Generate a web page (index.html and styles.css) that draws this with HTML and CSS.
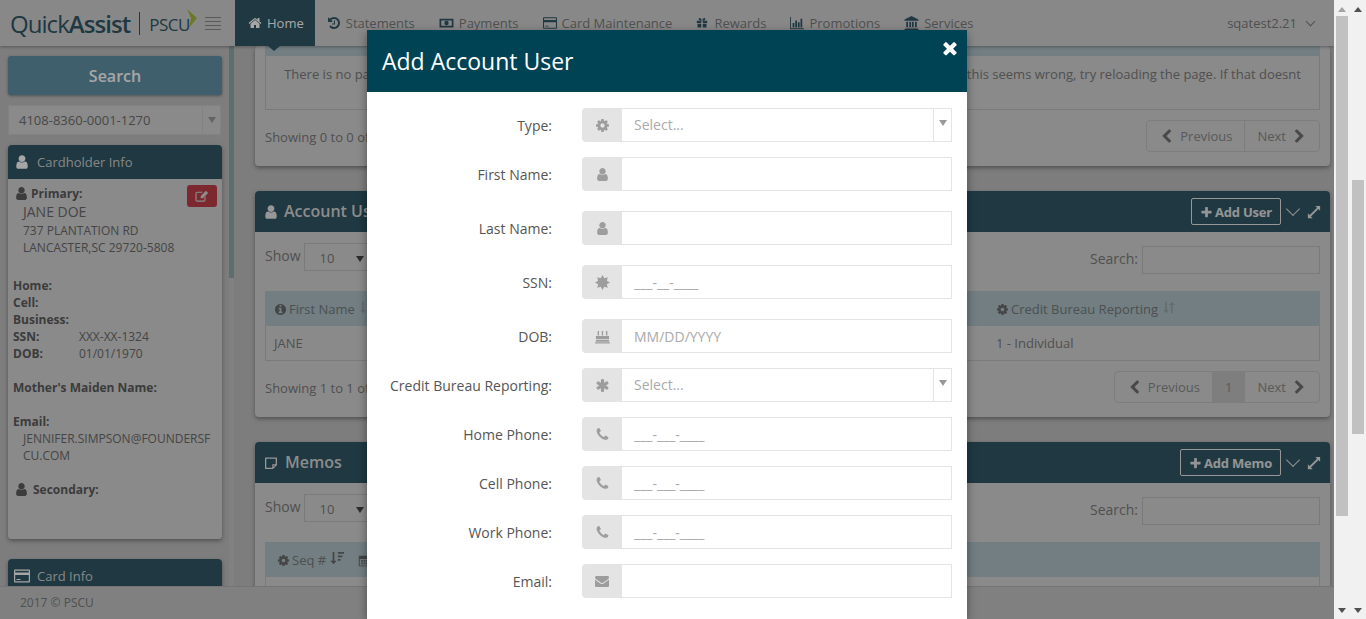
FILE: index.html

```html
<!DOCTYPE html>
<html lang="en">
<head>
  <meta charset="UTF-8">
  <title>QuickAssist - Add Account User</title>
  <link rel="stylesheet" href="styles.css">
</head>
<body>
  <svg class="defs" xmlns="http://www.w3.org/2000/svg">
    <symbol id="i-user" viewBox="0 0 1792 1792"><path d="M1536 1399q0 109-62.5 187t-150.5 78h-854q-88 0-150.5-78t-62.5-187q0-85 8.5-160.5t31.5-152 58.5-131 94-89 134.5-34.5q131 128 313 128t313-128q76 0 134.5 34.5t94 89 58.5 131 31.5 152 8.5 160.5zm-256-887q0 159-112.5 271.5t-271.5 112.5-271.5-112.5-112.5-271.5 112.5-271.5 271.5-112.5 271.5 112.5 112.5 271.5z"/></symbol>
    <symbol id="i-home" viewBox="0 0 1792 1792"><path d="M1472 992v480q0 26-19 45t-45 19h-384v-384h-256v384h-384q-26 0-45-19t-19-45v-480q0-1 .5-3t.5-3l575-474 575 474q1 2 1 6zm223-69l-62 74q-8 9-21 11h-3q-13 0-21-7l-692-577-692 577q-12 8-24 7-13-2-21-11l-62-74q-8-10-7-23.5t11-21.5l719-599q32-26 76-26t76 26l244 204v-195q0-14 9-23t23-9h192q14 0 23 9t9 23v408l219 182q10 8 11 21.5t-7 23.5z"/></symbol>
    <symbol id="i-cog" viewBox="0 0 1792 1792"><path d="M1152 896q0-106-75-181t-181-75-181 75-75 181 75 181 181 75 181-75 75-181zm512-109v222q0 12-8 23t-20 13l-185 28q-19 54-39 91 35 50 107 138 10 12 10 25t-9 23q-27 37-99 108t-94 71q-12 0-26-9l-138-108q-44 23-91 38-16 136-29 186-7 28-36 28h-222q-14 0-24.5-8.5t-11.5-21.5l-28-184q-49-16-90-37l-141 107q-10 9-25 9-14 0-25-11-126-114-165-168-7-10-7-23 0-12 8-23 15-21 51-66.5t54-70.5q-27-50-41-99l-183-27q-13-2-21-12.5t-8-23.5v-222q0-12 8-23t19-13l186-28q14-46 39-92-40-57-107-138-10-12-10-24 0-10 9-23 26-36 98.5-107.5t94.5-71.5q13 0 26 10l138 107q44-23 91-38 16-136 29-186 7-28 36-28h222q14 0 24.5 8.5t11.5 21.5l28 184q49 16 90 37l142-107q9-9 24-9 13 0 25 10 129 119 165 170 7 8 7 22 0 12-8 23-15 21-51 66.5t-54 70.5q26 50 41 98l183 28q13 2 21 12.5t8 23.5z"/></symbol>
    <symbol id="i-phone" viewBox="0 0 1792 1792"><path d="M1600 1240q0 27-10 70.5t-21 68.5q-21 50-122 106-94 51-186 51-27 0-53-3.5t-57.5-12.5-47-14.5-55.5-20.5-49-18q-98-35-175-83-127-79-264-216t-216-264q-48-77-83-175-3-9-18-49t-20.5-55.5-14.5-47-12.5-57.5-3.5-53q0-92 51-186 56-101 106-122 25-11 68.5-21t70.5-10q14 0 21 3 18 6 53 76 11 19 30 54t35 63.5 31 53.5q3 4 17.5 25t21.5 35.5 7 28.5q0 20-28.5 50t-62 55-62 53-28.5 46q0 9 5 22.5t8.5 20.5 14 24 11.5 19q76 137 174 235t235 174q2 1 19 11.5t24 14 20.5 8.5 22.5 5q18 0 46-28.5t53-62 55-62 50-28.5q14 0 28.5 7t35.5 21.5 25 17.5q25 15 53.5 31t63.5 35 54 30q70 35 76 53 3 7 3 21z"/></symbol>
    <symbol id="i-mail" viewBox="0 0 1792 1792"><path d="M1792 710v794q0 66-47 113t-113 47h-1472q-66 0-113-47t-47-113v-794q44 49 101 87 362 246 497 345 57 42 92.5 65.5t94.5 48 110 24.5h2q51 0 110-24.5t94.5-48 92.5-65.5q170-123 498-345 57-39 100-87zm0-294q0 79-49 151t-122 123q-376 261-468 325-10 7-42.5 30.5t-54 38-52 32.5-57.5 27-50 9h-2q-23 0-50-9t-57.5-27-52-32.5-54-38-42.5-30.5q-91-64-262-182.5t-205-142.5q-62-42-117-115.5t-55-136.5q0-78 41.5-130t118.5-52h1472q65 0 112.5 47t47.5 113z"/></symbol>
    <symbol id="i-times" viewBox="0 0 1792 1792"><path d="M1490 1322q0 40-28 68l-136 136q-28 28-68 28t-68-28l-294-294-294 294q-28 28-68 28t-68-28l-136-136q-28-28-28-68t28-68l294-294-294-294q-28-28-28-68t28-68l136-136q28-28 68-28t68 28l294 294 294-294q28-28 68-28t68 28l136 136q28 28 28 68t-28 68l-294 294 294 294q28 28 28 68z"/></symbol>
    <symbol id="i-asterisk" viewBox="0 0 1792 1792"><path d="M1546 1050q46 26 59.5 77.5t-12.5 97.5l-64 110q-26 46-77.5 59.5t-97.5-12.5l-266-153v307q0 52-38 90t-90 38h-128q-52 0-90-38t-38-90v-307l-266 153q-46 26-97.5 12.5t-77.5-59.5l-64-110q-26-46-12.5-97.5t59.5-77.5l266-154-266-154q-46-26-59.5-77.5t12.5-97.5l64-110q26-46 77.5-59.5t97.5 12.5l266 153v-307q0-52 38-90t90-38h128q52 0 90 38t38 90v307l266-153q46-26 97.5-12.5t77.5 59.5l64 110q26 46 12.5 97.5t-59.5 77.5l-266 154z"/></symbol>
    <symbol id="i-left" viewBox="0 0 1792 1792"><path d="M1427 301l-531 531 531 531q19 19 19 45t-19 45l-166 166q-19 19-45 19t-45-19l-742-742q-19-19-19-45t19-45l742-742q19-19 45-19t45 19l166 166q19 19 19 45t-19 45z"/></symbol>
    <symbol id="i-right" viewBox="0 0 1792 1792"><path d="M1363 877l-742 742q-19 19-45 19t-45-19l-166-166q-19-19-19-45t19-45l531-531-531-531q-19-19-19-45t19-45l166-166q19-19 45-19t45 19l742 742q19 19 19 45t-19 45z"/></symbol>
    <symbol id="i-plus" viewBox="0 0 1792 1792"><path d="M1600 736v192q0 40-28 68t-68 28h-416v416q0 40-28 68t-68 28h-192q-40 0-68-28t-28-68v-416h-416q-40 0-68-28t-28-68v-192q0-40 28-68t68-28h416v-416q0-40 28-68t68-28h192q40 0 68 28t28 68v416h416q40 0 68 28t28 68z"/></symbol>
    <symbol id="i-info" viewBox="0 0 1792 1792"><path d="M1152 1376v-160q0-14-9-23t-23-9h-96v-512q0-14-9-23t-23-9h-320q-14 0-23 9t-9 23v160q0 14 9 23t23 9h96v320h-96q-14 0-23 9t-9 23v160q0 14 9 23t23 9h448q14 0 23-9t9-23zm-128-896v-160q0-14-9-23t-23-9h-192q-14 0-23 9t-9 23v160q0 14 9 23t23 9h192q14 0 23-9t9-23zm640 416q0 209-103 385.5t-279.5 279.5-385.5 103-385.5-103-279.5-279.5-103-385.5 103-385.5 279.5-279.5 385.5-103 385.5 103 279.5 279.5 103 385.5z"/></symbol>
    <symbol id="i-history" viewBox="0 0 1792 1792"><path d="M1664 896q0 156-61 298t-164 245-245 164-298 61q-172 0-327-72.5t-264-204.5q-7-10-6.5-22.5t8.5-20.5l137-138q10-9 25-9 16 2 23 12 73 95 179 147t225 52q104 0 198.5-40.5t163.5-109.5 109.5-163.5 40.5-198.5-40.5-198.5-109.5-163.5-163.5-109.5-198.5-40.5q-98 0-188 35.5t-160 101.5l137 138q31 30 14 69-17 40-59 40h-448q-26 0-45-19t-19-45v-448q0-42 40-59 39-17 69 14l130 129q107-101 244.5-156.5t284.5-55.5q156 0 298 61t245 164 164 245 61 298zm-640-288v448q0 14-9 23t-23 9h-320q-14 0-23-9t-9-23v-64q0-14 9-23t23-9h224v-352q0-14 9-23t23-9h64q14 0 23 9t9 23z"/></symbol>
    <symbol id="i-money" viewBox="0 0 16 16"><path fill-rule="evenodd" d="M0 3h16v10H0zM2 5v6h12V5zM8 5.500a2.500 2.500 0 1 1 0 5 2.500 2.500 0 0 1 0-5z"/></symbol>
    <symbol id="i-card" viewBox="0 0 16 16"><path fill-rule="evenodd" d="M1 1.500h14a1 1 0 0 1 1 1v11a1 1 0 0 1-1 1H1a1 1 0 0 1-1-1v-11a1 1 0 0 1 1-1zM1.200 2.700v1.800h13.600V2.700zM1.200 7v6.300h13.600V7zM2.500 11h4v1h-4z"/></symbol>
    <symbol id="i-gift" viewBox="0 0 16 16"><path d="M1 5h6v3H1zM9 5h6v3H9zM2 9h5v5H2zM9 9h5v5H9zM4 1.500c1.500-1 3 .5 4 3 1-2.500 2.500-4 4-3 1.200 1 0 3-2 3H6c-2 0-3.200-2-2-3z"/></symbol>
    <symbol id="i-chart" viewBox="0 0 16 16"><path d="M0 1h1v13h15v1H0zM3 8h2v5H3zM6 5h2v8H6zM9 7h2v6H9zM12 3h2v10h-2z"/></symbol>
    <symbol id="i-bank" viewBox="0 0 16 16"><path d="M8 0l8 4v1.500H0V4zM2 6.500h2v6H2zM5.500 6.500h2v6h-2zM8.500 6.500h2v6h-2zM12 6.500h2v6h-2zM1 13.300h14v1H1zM0 14.800h16V16H0z"/></symbol>
    <symbol id="i-cake" viewBox="0 0 16 16"><path d="M2.800 2h1.500v5H2.800zM7.200 2h1.500v5H7.200zM11.700 2h1.500v5h-1.500zM1 7.500h14V11H1zM1 11.800h14v1.700H1zM0 14h16v1.500H0z"/></symbol>
    <symbol id="i-cert" viewBox="0 0 16 16"><path d="M8 0l1.910 3.380 3.750-1.040-1.040 3.750L16 8l-3.380 1.910 1.040 3.750-3.750-1.040L8 16l-1.910-3.380-3.750 1.040 1.040-3.750L0 8l3.380-1.910-1.040-3.750 3.750 1.040z"/></symbol>
    <symbol id="i-edit" viewBox="0 0 16 16"><path d="M2.500 3H9L7.700 4.300H2.500a.7.700 0 0 0-.7.700v7.500c0 .4.300.7.700.7H10c.4 0 .7-.3.700-.7V9.500L12 8.200v4.300a2 2 0 0 1-2 2H2.500a2 2 0 0 1-2-2V5a2 2 0 0 1 2-2zM12.500 2l2.500 2.500-6 6H6.500V8z"/></symbol>
    <symbol id="i-note" viewBox="0 0 16 16"><path fill-rule="evenodd" d="M2.500 2.500h11a.5.500 0 0 1 .5.500v7l-4 4H2.500a.5.500 0 0 1-.5-.5V3a.5.500 0 0 1 .5-.5zM3.300 3.800v8.900h6V9.300h3.400V3.800zM10.500 10.500v1.600l1.600-1.600z"/></symbol>
    <symbol id="i-expand" viewBox="0 0 16 16"><path d="M9.500 1H15v5.500l-2-2L4.500 13l2 2H1V9.500l2 2L11.500 3z"/></symbol>
    <symbol id="i-sort" viewBox="0 0 16 16"><path d="M4 1h2v10h2.500L5 15 1.500 11H4zM11 15V5H8.500L12 1l3.500 4H13v10z"/></symbol>
    <symbol id="i-sortdown" viewBox="0 0 16 16"><path d="M3 1h2v10h2.500L4 15 .5 11H3zM9 1h7v2H9zM9 5h5v2H9zM9 9h3v2H9z"/></symbol>
    <symbol id="i-cal" viewBox="0 0 16 16"><path fill-rule="evenodd" d="M1 2h14v13H1zM2.200 6v8h11.600V6zM4 7.500h2v2H4zM7 7.500h2v2H7zM10 7.500h2v2h-2zM4 10.500h2v2H4zM7 10.500h2v2H7zM10 10.500h2v2h-2z"/></symbol>
  </svg>

  <div class="window">
    <div class="app">
      <header class="topbar">
        <div class="logo">
          <span class="logo-name">Quick<b>Assist</b></span>
          <span class="logo-psc">PSCU</span>
          <svg class="logo-mark" viewBox="0 0 10 19"><path d="M0 0l10 9-8 10 2-10z"/></svg>
          <span class="burger"><i></i><i></i><i></i><i></i></span>
        </div>
        <nav class="nav">
          <a class="nav-item active"><svg class="ico"><use href="#i-home"/></svg>Home</a>
          <a class="nav-item"><svg class="ico"><use href="#i-history"/></svg>Statements</a>
          <a class="nav-item"><svg class="ico wide"><use href="#i-money"/></svg>Payments</a>
          <a class="nav-item"><svg class="ico"><use href="#i-card"/></svg>Card Maintenance</a>
          <a class="nav-item"><svg class="ico slim"><use href="#i-gift"/></svg>Rewards</a>
          <a class="nav-item nudge-left"><svg class="ico wide tight"><use href="#i-chart"/></svg>Promotions</a>
          <a class="nav-item"><svg class="ico wide"><use href="#i-bank"/></svg>Services</a>
        </nav>
        <div class="account">sqatest2.21 <span class="chev"></span></div>
      </header>

      <div class="middle">
        <aside class="sidebar">
          <button class="search-btn">Search</button>
          <div class="acct-select">
            <span>4108-8360-0001-1270</span>
            <span class="acct-arrow"><i class="tri"></i></span>
          </div>

          <section class="side-panel">
            <h3 class="side-head"><svg class="ico"><use href="#i-user"/></svg>Cardholder Info</h3>
            <div class="side-body">
              <button class="edit-btn"><svg class="ico"><use href="#i-edit"/></svg></button>
              <div class="who"><svg class="ico"><use href="#i-user"/></svg>Primary:</div>
              <div class="name">JANE DOE</div>
              <div class="addr">737 PLANTATION RD</div>
              <div class="addr">LANCASTER,SC 29720-5808</div>
              <div class="gap"></div>
              <div class="line"><b>Home:</b></div>
              <div class="line"><b>Cell:</b></div>
              <div class="line"><b>Business:</b></div>
              <div class="line"><b>SSN:</b><span>XXX-XX-1324</span></div>
              <div class="line"><b>DOB:</b><span>01/01/1970</span></div>
              <div class="line-gap"></div>
              <div class="line"><b>Mother's Maiden Name:</b></div>
              <div class="line-gap"></div>
              <div class="line"><b>Email:</b></div>
              <div class="addr">JENNIFER.SIMPSON@FOUNDERSF<br>CU.COM</div>
              <div class="line-gap"></div>
              <div class="who second"><svg class="ico"><use href="#i-user"/></svg>Secondary:</div>
            </div>
          </section>

          <section class="side-panel">
            <h3 class="side-head"><svg class="ico"><use href="#i-card"/></svg>Card Info</h3>
          </section>
        </aside>

        <div class="rail"><div class="rail-thumb"></div></div>

        <main class="main">
          <section class="card first">
            <div class="strip"></div>
            <div class="notice">There is no payment information currently available to display for these card accounts at the present moment. If this seems wrong, try reloading the page. If that doesnt<br>work, please contact the help desk for further assistance.</div>
            <div class="foot">
              <span class="info">Showing 0 to 0 of 0 entries</span>
              <div class="pager">
                <a><svg class="ico"><use href="#i-left"/></svg>Previous</a>
                <a>Next<svg class="ico after"><use href="#i-right"/></svg></a>
              </div>
            </div>
          </section>

          <section class="card">
            <div class="card-head">
              <svg class="ico"><use href="#i-user"/></svg>
              <h2>Account Users</h2>
              <button class="add-btn"><svg class="ico"><use href="#i-plus"/></svg>Add User</button>
              <span class="chev big"></span>
              <svg class="ico expand"><use href="#i-expand"/></svg>
            </div>
            <div class="card-body">
              <div class="tools">
                <span>Show</span><span class="len">10 <i class="tri dark"></i></span>
                <label class="filter">Search:<span class="filter-box"></span></label>
              </div>
              <div class="table">
                <div class="thead">
                  <span><svg class="ico"><use href="#i-info"/></svg>First Name<svg class="ico sort"><use href="#i-sort"/></svg></span>
                  <span><svg class="ico"><use href="#i-cog"/></svg>Credit Bureau Reporting<svg class="ico sort"><use href="#i-sort"/></svg></span>
                </div>
                <div class="tbody">
                  <span>JANE</span>
                  <span>1 - Individual</span>
                </div>
              </div>
              <div class="foot">
                <span class="info">Showing 1 to 1 of 1 entries</span>
                <div class="pager">
                  <a><svg class="ico"><use href="#i-left"/></svg>Previous</a>
                  <a class="current">1</a>
                  <a>Next<svg class="ico after"><use href="#i-right"/></svg></a>
                </div>
              </div>
            </div>
          </section>

          <section class="card">
            <div class="card-head">
              <svg class="ico"><use href="#i-note"/></svg>
              <h2 class="memo-title">Memos</h2>
              <button class="add-btn"><svg class="ico"><use href="#i-plus"/></svg>Add Memo</button>
              <span class="chev big"></span>
              <svg class="ico expand"><use href="#i-expand"/></svg>
            </div>
            <div class="card-body">
              <div class="tools">
                <span>Show</span><span class="len">10 <i class="tri dark"></i></span>
                <label class="filter">Search:<span class="filter-box"></span></label>
              </div>
              <div class="table">
                <div class="thead memo">
                  <span><svg class="ico"><use href="#i-cog"/></svg>Seq #<svg class="ico sort on"><use href="#i-sortdown"/></svg></span>
                  <span><svg class="ico"><use href="#i-cal"/></svg>Date</span>
                </div>
                <div class="tbody"></div>
              </div>
            </div>
          </section>
        </main>
      </div>

      <footer class="footer">2017 © PSCU</footer>
      <div class="overlay"></div>

      <div class="modal">
        <div class="modal-head">
          <h1>Add Account User</h1>
          <svg class="close"><use href="#i-times"/></svg>
        </div>
        <form class="modal-body">
          <div class="row">
            <label>Type:</label>
            <div class="group"><span class="addon"><svg class="ico"><use href="#i-cog"/></svg></span><input class="sel" placeholder="Select..."><span class="sel-arrow"><i class="tri"></i></span></div>
          </div>
          <div class="row tall">
            <label>First Name:</label>
            <div class="group"><span class="addon"><svg class="ico"><use href="#i-user"/></svg></span><input></div>
          </div>
          <div class="row tall">
            <label>Last Name:</label>
            <div class="group"><span class="addon"><svg class="ico"><use href="#i-user"/></svg></span><input></div>
          </div>
          <div class="row tall">
            <label>SSN:</label>
            <div class="group"><span class="addon"><svg class="ico"><use href="#i-cert"/></svg></span><input placeholder="___-__-____"></div>
          </div>
          <div class="row">
            <label>DOB:</label>
            <div class="group"><span class="addon"><svg class="ico"><use href="#i-cake"/></svg></span><input placeholder="MM/DD/YYYY"></div>
          </div>
          <div class="row">
            <label>Credit Bureau Reporting:</label>
            <div class="group"><span class="addon"><svg class="ico"><use href="#i-asterisk"/></svg></span><input class="sel" placeholder="Select..."><span class="sel-arrow"><i class="tri"></i></span></div>
          </div>
          <div class="row">
            <label>Home Phone:</label>
            <div class="group"><span class="addon"><svg class="ico"><use href="#i-phone"/></svg></span><input placeholder="___-___-____"></div>
          </div>
          <div class="row">
            <label>Cell Phone:</label>
            <div class="group"><span class="addon"><svg class="ico"><use href="#i-phone"/></svg></span><input placeholder="___-___-____"></div>
          </div>
          <div class="row">
            <label>Work Phone:</label>
            <div class="group"><span class="addon"><svg class="ico"><use href="#i-phone"/></svg></span><input placeholder="___-___-____"></div>
          </div>
          <div class="row">
            <label>Email:</label>
            <div class="group"><span class="addon"><svg class="ico mail"><use href="#i-mail"/></svg></span><input></div>
          </div>
        </form>
      </div>
    </div>

    <div class="scrollbar inner"><i class="up"></i><div class="thumb"></div><i class="down"></i></div>
    <div class="scrollbar outer"><i class="up"></i><div class="thumb"></div><i class="down"></i></div>
  </div>
</body>
</html>
```

FILE: styles.css

```css
* {
  box-sizing: border-box;
}

html,
body {
  margin: 0;
  height: 100%;
  overflow: hidden;
}

body {
  font-family: "Open Sans", "Liberation Sans", sans-serif;
  font-size: 13px;
  color: #7b7b7b;
}

.defs {
  display: none;
}

.window {
  display: flex;
  height: 619px;
}

.app {
  position: relative;
  width: 1334px;
  display: flex;
  flex-direction: column;
  overflow: hidden;
  background: #c0c0c0;
}

.ico {
  width: 14px;
  height: 14px;
  fill: currentColor;
  vertical-align: -2px;
  flex: none;
}

/* top bar */

.topbar {
  position: relative;
  z-index: 2;
  height: 46px;
  flex: none;
  display: flex;
  background: #d2d2d2;
  box-shadow: 0 1px 3px rgba(0, 0, 0, 0.3);
}

.logo {
  width: 235px;
  display: flex;
  align-items: center;
  flex: none;
  color: #305766;
  padding-left: 10px;
}

.logo-name {
  font-size: 24px;
  letter-spacing: -0.95px;
  padding-right: 9px;
  border-right: 1px solid #305766;
  line-height: 23px;
  height: 23px;
  white-space: nowrap;
}

.logo-name b {
  font-weight: 600;
}

.logo-psc {
  font-size: 17px;
  margin-left: 9px;
  letter-spacing: -0.5px;
  padding-top: 3px;
}

.logo-mark {
  width: 10px;
  height: 19px;
  flex: none;
  align-self: flex-start;
  fill: #a8b83d;
  margin: 9px 0 0 -3px;
}

.burger {
  display: flex;
  flex-direction: column;
  gap: 3px;
  width: 16px;
  margin-left: 8px;
}

.burger i {
  height: 1px;
  background: #8a8a8a;
}

.nav {
  display: flex;
  flex: 1;
}

.nav-item {
  position: relative;
  display: flex;
  align-items: center;
  gap: 5px;
  padding: 0 12px;
  color: #7b7b7b;
  white-space: nowrap;
}

.nav-item .ico {
  color: #305766;
}

.nav-item .ico.wide {
  width: 15px;
}

.nav-item .ico.slim {
  width: 12px;
  margin-right: 1px;
}

.nav-item .ico.tight {
  width: 16px;
  margin-right: -1px;
}

.nudge-left {
  padding-left: 11px;
}

.nav-item.active {
  background: #305766;
  color: #fff;
  padding: 0 11px 0 13px;
}

.nav-item.active .ico {
  color: #fff;
}

.nav-item.active::after {
  content: "";
  position: absolute;
  left: 33px;
  bottom: -5px;
  border: 6px solid transparent;
  border-bottom: 0;
  border-top: 5px solid #305766;
}

.account {
  display: flex;
  align-items: center;
  gap: 10px;
  padding-right: 20px;
}

.chev {
  width: 7px;
  height: 7px;
  border-right: 1px solid currentColor;
  border-bottom: 1px solid currentColor;
  transform: rotate(45deg);
  margin-top: -4px;
}

/* sidebar */

.middle {
  flex: 1;
  min-height: 0;
  display: flex;
  overflow: hidden;
}

.sidebar {
  width: 229px;
  flex: none;
  padding: 10px 7px 0 8px;
}

.search-btn {
  display: block;
  width: 100%;
  height: 39px;
  border: 0;
  border-radius: 3px;
  background: #6192a6;
  color: #fff;
  font: 600 16px "Open Sans", sans-serif;
  box-shadow: 0 1px 3px rgba(0, 0, 0, 0.35);
}

.acct-select {
  display: flex;
  justify-content: space-between;
  height: 30px;
  margin: 10px 1px 10px 0;
  border: 1px solid #c8c8c8;
  background: #d4d4d4;
  line-height: 28px;
  padding-left: 10px;
  color: #6f6f6f;
}

.acct-arrow {
  width: 18px;
  border-left: 1px solid #c8c8c8;
  display: flex;
  align-items: center;
  justify-content: center;
}

.tri {
  display: block;
  border: 4px solid transparent;
  border-bottom: 0;
  border-top: 6px solid #999;
}

.tri.dark {
  display: inline-block;
  border-top-color: #444;
  margin-left: 18px;
  vertical-align: 1px;
}

.side-panel {
  margin-bottom: 20px;
  border-radius: 4px;
  box-shadow: 0 2px 4px rgba(0, 0, 0, 0.35);
}

.side-head {
  margin: 0;
  height: 34px;
  display: flex;
  align-items: center;
  gap: 7px;
  padding-left: 6px;
  background: #305766;
  border-radius: 4px 4px 0 0;
  color: #d0d0d0;
  font-size: 13px;
  font-weight: 400;
}

.side-head .ico {
  width: 16px;
  height: 16px;
  color: #fff;
}

.side-body {
  position: relative;
  height: 360px;
  padding: 6px 0 0 5px;
  background: #d4d4d4;
  border-radius: 0 0 4px 4px;
  font-size: 12px;
  line-height: 17px;
  color: #6a6a6a;
}

.edit-btn {
  position: absolute;
  top: 6px;
  right: 5px;
  width: 30px;
  height: 22px;
  padding: 0;
  border: 0;
  border-radius: 3px;
  background: #c03c48;
  color: #d8d8d8;
}

.who {
  padding-left: 1px;
  font-weight: 700;
  color: #5c5c5c;
}

.who .ico {
  margin-right: 2px;
  width: 15px;
  height: 15px;
  vertical-align: -3px;
}

.who.second .ico {
  margin-right: 4px;
}

.name {
  padding-left: 10px;
  font-size: 14px;
  line-height: 20px;
}

.addr {
  padding-left: 10px;
}

.gap {
  height: 21px;
}

.line-gap {
  height: 17px;
}

.line {
  display: flex;
}

.line b {
  width: 66px;
  color: #5c5c5c;
  white-space: nowrap;
}

.rail {
  width: 5px;
  flex: none;
  background: #c6c6c6;
}

.rail-thumb {
  height: 232px;
  background: #8fa9ad;
}

/* main cards */

.main {
  flex: 1;
  min-width: 0;
  padding-left: 21px;
  padding-right: 4px;
}

.card {
  margin-bottom: 25px;
  background: #d4d4d4;
  border-radius: 4px;
  box-shadow: 0 2px 4px rgba(0, 0, 0, 0.35);
}

.card.first {
  height: 120px;
  padding: 0 10px;
}

.strip {
  height: 10px;
  background: #afc2c8;
}

.notice {
  height: 54px;
  padding: 8px 0;
  border: 1px solid #bcbcbc;
  border-top: 0;
  line-height: 20px;
  text-align: center;
  white-space: nowrap;
  overflow: hidden;
}

.foot {
  display: flex;
  justify-content: space-between;
  align-items: center;
  margin-top: 10px;
}

.info {
  padding-top: 2px;
}

.pager {
  display: flex;
  height: 32px;
  border: 1px solid #c0c0c0;
  border-radius: 4px;
  line-height: 30px;
}

.pager a {
  padding: 0 12px;
  color: #8a8a8a;
  border-left: 1px solid #c0c0c0;
}

.pager a:first-child {
  border-left: 0;
}

.pager .current {
  background: #c2c2c2;
  padding: 0 12px;
}

.pager .ico {
  width: 15px;
  height: 15px;
  margin-right: 6px;
  vertical-align: -3px;
  color: #707070;
}

.pager .ico.after {
  margin: 0 0 0 6px;
}

.card-head {
  display: flex;
  align-items: center;
  height: 41px;
  padding: 0 9px 0 8px;
  background: #305766;
  border-radius: 4px 4px 0 0;
  color: #fff;
}

.card-head > .ico {
  width: 16px;
  height: 16px;
  color: #e8e8e8;
}

.card-head h2 {
  margin: -1px auto 0 5px;
  font-size: 16px;
  font-weight: 600;
  color: #d8d8d8;
}

.card-head h2.memo-title {
  margin-left: 6px;
}

.add-btn {
  height: 27px;
  padding: 0 8px;
  background: transparent;
  border: 1px solid #e8e8e8;
  border-radius: 2px;
  color: #e4e4e4;
  font: 700 13px "Open Sans", sans-serif;
  letter-spacing: -0.2px;
  white-space: nowrap;
}

.add-btn .ico {
  width: 13px;
  height: 13px;
  margin-right: 2px;
}

.chev.big {
  width: 10px;
  height: 10px;
  color: #e0e0e0;
  margin: -5px 9px 0 7px;
}

.card-head > .ico.expand {
  width: 14px;
  height: 14px;
}

.card-body {
  padding: 11px 10px 14px;
}

.tools {
  display: flex;
  align-items: flex-start;
  height: 32px;
  font-size: 14px;
}

.len {
  width: 72px;
  height: 28px;
  margin-left: 3px;
  padding-left: 15px;
  border: 1px solid #bcbcbc;
  line-height: 28px;
  font-size: 13px;
  white-space: nowrap;
}

.tools > span:first-child {
  line-height: 26px;
}

.filter {
  margin-left: auto;
  display: flex;
  align-items: flex-start;
  gap: 4px;
  padding-top: 3px;
  line-height: 26px;
}

.filter-box {
  width: 178px;
  height: 28px;
  border: 1px solid #bcbcbc;
}

.table {
  margin-top: 16px;
}

.thead {
  display: grid;
  grid-template-columns: 722px 1fr;
  height: 35px;
  align-items: center;
  background: #afc2c8;
  color: #757b7d;
}

.thead.memo {
  grid-template-columns: 84px 1fr;
}

.thead span {
  padding-left: 9px;
  white-space: nowrap;
}

.thead .ico {
  width: 13px;
  height: 13px;
  margin-right: 2px;
  color: #6a6a6a;
}

.thead .ico.sort {
  margin: 0 0 0 4px;
  vertical-align: 0;
  color: #9aa6aa;
}

.thead .ico.sort.on {
  width: 14px;
  height: 14px;
  color: #6a6a6a;
}

.thead.memo span:first-child {
  padding-left: 12px;
}

.tbody {
  display: grid;
  grid-template-columns: 722px 1fr;
  height: 35px;
  align-items: center;
  border: 1px solid #bcbcbc;
  border-top: 0;
}

.tbody span {
  padding-left: 8px;
}

/* footer */

.footer {
  position: relative;
  z-index: 2;
  flex: none;
  height: 33px;
  padding-left: 20px;
  line-height: 32px;
  font-size: 12px;
  background: #c5c5c5;
  border-top: 1px solid #b4b4b4;
}

/* modal */

.overlay {
  position: absolute;
  inset: 0;
  z-index: 5;
  background: rgba(0, 0, 0, 0.35);
}

.modal {
  position: absolute;
  z-index: 6;
  top: 30px;
  left: 367px;
  width: 600px;
  bottom: 0;
  background: #fff;
  box-shadow: 0 3px 9px rgba(0, 0, 0, 0.4);
}

.modal-head {
  position: relative;
  height: 62px;
  padding-left: 15px;
  background: #004355;
  color: #fff;
}

.modal-head h1 {
  margin: 0;
  font-size: 23px;
  font-weight: 400;
  line-height: 62px;
}

.close {
  position: absolute;
  top: 8px;
  right: 7px;
  width: 20px;
  height: 20px;
  fill: #fff;
}

.modal-body {
  padding-top: 16px;
}

.row {
  display: flex;
  align-items: center;
  height: 34px;
  margin-bottom: 15px;
  font-size: 14px;
  color: #555;
}

.row.tall {
  margin-bottom: 20px;
}

.row label {
  width: 185px;
  margin-right: 30px;
  text-align: right;
}

.group {
  display: flex;
  width: 370px;
  height: 34px;
}

.addon {
  width: 40px;
  flex: none;
  display: flex;
  align-items: center;
  justify-content: center;
  background: #e4e4e4;
  border-radius: 4px 0 0 4px;
  color: #9d9d9d;
}

.addon .ico {
  width: 15px;
  height: 15px;
}

.addon .ico.mail {
  width: 14px;
  height: 14px;
}

.group input {
  flex: 1;
  min-width: 0;
  padding: 0 12px;
  border: 1px solid #e4e4e4;
  border-left: 0;
  outline: 0;
  font: 14px "Open Sans", sans-serif;
  color: #555;
}

.group input.sel {
  padding-bottom: 2px;
}

.group input::placeholder {
  color: #aaa;
  opacity: 1;
}

.sel-arrow {
  width: 19px;
  flex: none;
  display: flex;
  align-items: center;
  justify-content: center;
  padding-bottom: 4px;
  border: 1px solid #e4e4e4;
  margin-left: -1px;
}

/* page scrollbars */

.scrollbar {
  width: 16px;
  flex: none;
  display: flex;
  flex-direction: column;
  background: #f1f1f1;
}

.scrollbar i {
  display: block;
  margin: 0 auto;
  border: 4px solid transparent;
}

.scrollbar .up {
  margin-top: 7px;
  border-top: 0;
  border-bottom: 5px solid #a3a3a3;
}

.scrollbar .down {
  margin-top: auto;
  margin-bottom: 6px;
  border-bottom: 0;
  border-top: 5px solid #505050;
}

.outer .up {
  border-bottom-color: #505050;
}

.thumb {
  width: 12px;
  margin: 4px auto 0;
  background: #c1c1c1;
}

.inner .thumb {
  height: 500px;
}

.outer .thumb {
  margin-top: 168px;
  height: 254px;
}
```
